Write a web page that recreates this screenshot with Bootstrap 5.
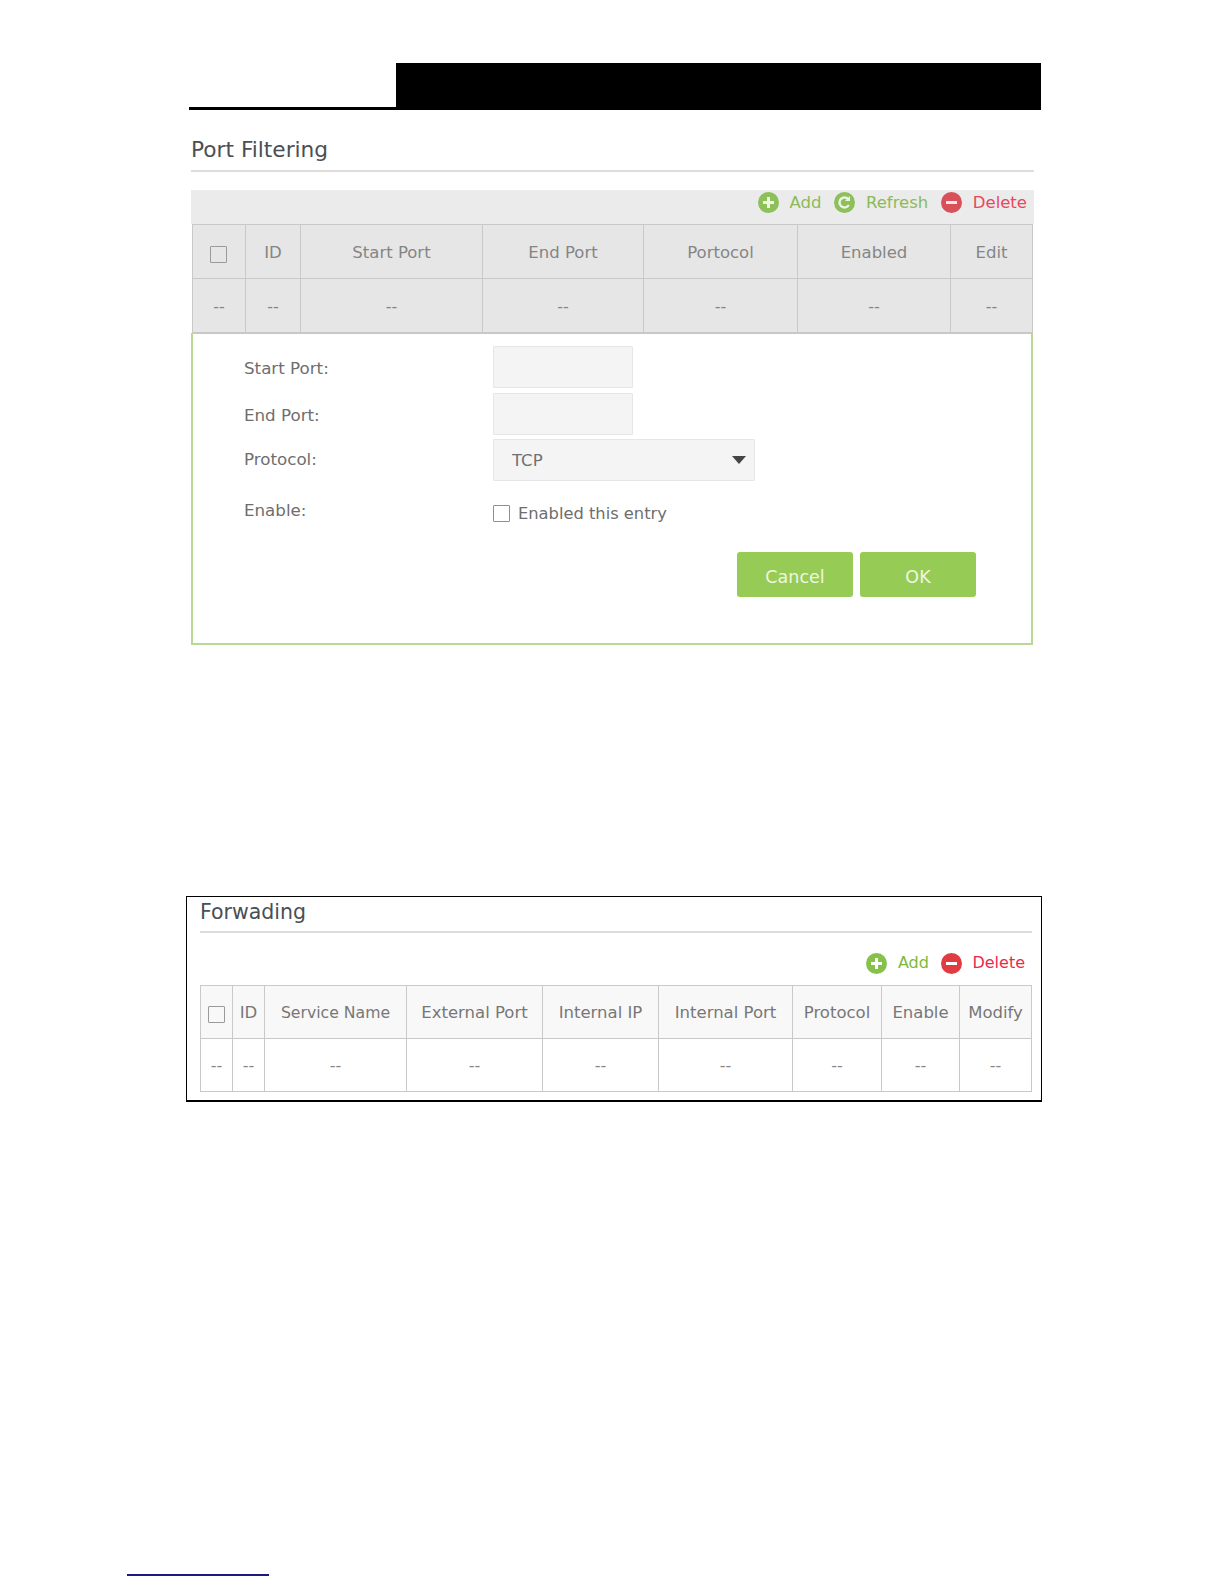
<!DOCTYPE html>
<html lang="en">
<head>
<meta charset="utf-8">
<title>Port Filtering</title>
<link href="https://cdn.jsdelivr.net/npm/bootstrap@5.3.0/dist/css/bootstrap.min.css" rel="stylesheet">
<style>
body{background:#fff;font-family:"DejaVu Sans","Liberation Sans",sans-serif;color:#666;margin:0}
.sheet{width:1224px;height:1584px;padding-top:63px;overflow:hidden;position:relative}
.pg-head{margin-left:189px;width:852px;height:47px}
.pg-head-l{width:207px;border-bottom:3px solid #000}
.pg-head-r{background:#000}
.filter-sec{margin-left:191px;width:843px;margin-top:26px}
.sec-title{font-size:21.700px;line-height:28px;color:#4a4f55;font-weight:400;margin:0;padding-bottom:6px;border-bottom:2px solid #ddd}
.tool-bar{height:34px;background:#ebebeb;margin-top:18px;padding:0 7px 9px 0;font-size:16.500px;line-height:22px;gap:13px}
.tool-item{gap:10.500px}
.tool-add{color:#8abb58}
.tool-del{color:#e8475c}
.fwd-tools .tool-add{color:#7cb93a}
.fwd-tools .tool-del{color:#ea2a4c}
.grid-tbl{table-layout:fixed;font-size:16.500px;margin:0;--bs-table-bg:transparent;--bs-table-border-color:#c9c9c9;border-color:#c9c9c9;text-align:center}
.grid-tbl th,.grid-tbl td{font-weight:400;padding:2px 0 0;vertical-align:middle;color:#858585;border-width:1px;border-style:solid;border-color:#c9c9c9}
.grid-tbl td{font-size:16px}
.grid-a{width:840px;background:#e6e6e6;margin-left:1px}
.grid-a th{padding-top:4px}
.grid-a tr{height:54px}
.box-chk{width:17px;height:17px;border:1px solid #9a9a9a;background:transparent;border-radius:1px;display:inline-block;vertical-align:middle;margin:2px 1px 0 0}
.edit-panel{height:312px;border:2px solid #b9d795;border-top-width:1px;padding:12px 0 0 51px;width:842px;font-size:16.700px;color:#6e6e6e}
.edit-row{display:flex;align-items:center}
.edit-lbl{width:249px}
.lbl-top{margin-top:4px}
.fld{width:140px;height:42px;background:#f4f4f4;border:1px solid #e6e6e6;border-radius:1px;box-shadow:none}
.fld-sel{width:262px;height:42px;background-color:#f4f4f4;border:1px solid #e6e6e6;border-radius:1px;font-size:16.500px;color:#707070;padding:2px 0 0 18px;background-position:right 7px center;background-size:16px 10px;box-shadow:none;font-family:inherit;background-image:url("data:image/svg+xml,%3Csvg xmlns='http://www.w3.org/2000/svg' viewBox='0 0 16 10'%3E%3Cpath fill='%23444' d='M1 1h14L8 9z'/%3E%3C/svg%3E")}
.r-end{margin-top:5px}
.r-proto{margin-top:4px}
.r-en{margin-top:22px;height:22px}
.lbl-en{margin-bottom:6px}
.en-txt{font-size:16.300px}
.form-check-input.en-chk{width:17px;height:17px;border:1px solid #8f8f8f;border-radius:1px;margin:0 8px 2px 0;background:#fff;float:none}
.act-row{gap:7px;margin-top:27px;width:732px;justify-content:flex-end}
.act-btn{width:116px;height:45px;background:#96cb56;border:0;border-radius:3px;color:#eef7e2;font-size:17.500px;padding:5px 0 0}
.fwd-box{margin:251px 0 0 186px;width:856px;height:206px;border:1px solid #000;padding:0 9px 0 13px;border-bottom-width:2px}
.fwd-title{font-size:20.500px;line-height:28px;color:#4a4f55;font-weight:400;margin:0;padding:1px 0 5px;border-bottom:2px solid #ddd;width:832px}
.fwd-tools{height:52px;width:832px;padding:8px 7px 0 0;font-size:16px;line-height:22px;gap:12px}
.grid-b{width:831px;background:#fff}
.grid-b tr{height:53px}
.grid-b th{background:#f8f8f8;color:#777}
.grid-b td{color:#888}
.grid-b .th-svc{font-size:15.700px}
.foot-rule{width:142px;height:2px;background:#1a1a80;position:absolute;top:1574px;left:127px}
.ca1{width:53px}.ca2{width:55px}.ca3{width:182px}.ca4{width:161px}.ca5{width:154px}.ca6{width:153px}.ca7{width:82px}
.cb1{width:32px}.cb2{width:32px}.cb3{width:142px}.cb4{width:136px}.cb5{width:116px}.cb6{width:134px}.cb7{width:89px}.cb8{width:78px}.cb9{width:72px}
</style>
</head>
<body>
<div class="sheet">
  <div class="pg-head d-flex">
    <div class="pg-head-l"></div>
    <div class="pg-head-r flex-grow-1"></div>
  </div>

  <section class="filter-sec">
    <h5 class="sec-title">Port Filtering</h5>
    <div class="tool-bar d-flex justify-content-end align-items-center">
      <span class="tool-item d-inline-flex align-items-center tool-add">
        <svg width="21" height="21" viewBox="0 0 21 21"><circle cx="10.500" cy="10.500" r="10.500" fill="#8dbf5a"/><path d="M10.500 5v11M5 10.500h11" stroke="#eef4e4" stroke-width="3"/></svg>Add</span>
      <span class="tool-item d-inline-flex align-items-center tool-add">
        <svg width="21" height="21" viewBox="0 0 21 21"><circle cx="10.500" cy="10.500" r="10.500" fill="#8dbf5a"/><path d="M14.800 13A5 5 0 1 1 14.500 7.500" fill="none" stroke="#eef4e4" stroke-width="2.400"/><path d="M16 4v5h-5z" fill="#eef4e4"/></svg>Refresh</span>
      <span class="tool-item d-inline-flex align-items-center tool-del">
        <svg width="21" height="21" viewBox="0 0 21 21"><circle cx="10.500" cy="10.500" r="10.500" fill="#d9505a"/><path d="M5 10.500h11" stroke="#f8e6e6" stroke-width="3"/></svg>Delete</span>
    </div>
    <table class="table grid-tbl grid-a">
      <colgroup><col class="ca1"><col class="ca2"><col class="ca3"><col class="ca4"><col class="ca5"><col class="ca6"><col class="ca7"></colgroup>
      <thead><tr><th><span class="box-chk"></span></th><th>ID</th><th>Start Port</th><th>End Port</th><th>Portocol</th><th>Enabled</th><th>Edit</th></tr></thead>
      <tbody><tr><td>--</td><td>--</td><td>--</td><td>--</td><td>--</td><td>--</td><td>--</td></tr></tbody>
    </table>
    <form class="edit-panel">
      <div class="edit-row"><label class="edit-lbl lbl-top">Start Port:</label><input class="form-control fld" type="text"></div>
      <div class="edit-row r-end"><label class="edit-lbl lbl-top">End Port:</label><input class="form-control fld" type="text"></div>
      <div class="edit-row r-proto"><label class="edit-lbl">Protocol:</label><select class="form-select fld-sel"><option>TCP</option></select></div>
      <div class="edit-row r-en"><label class="edit-lbl lbl-en">Enable:</label><div class="d-flex align-items-center"><input class="form-check-input en-chk" type="checkbox"><span class="en-txt">Enabled this entry</span></div></div>
      <div class="d-flex act-row"><button type="button" class="btn act-btn">Cancel</button><button type="button" class="btn act-btn">OK</button></div>
    </form>
  </section>

  <section class="fwd-box">
    <h5 class="fwd-title">Forwading</h5>
    <div class="fwd-tools d-flex justify-content-end align-items-center">
      <span class="tool-item d-inline-flex align-items-center tool-add">
        <svg width="21" height="21" viewBox="0 0 21 21"><circle cx="10.500" cy="10.500" r="10.500" fill="#86c24a"/><path d="M10.500 5v11M5 10.500h11" stroke="#fff" stroke-width="3"/></svg>Add</span>
      <span class="tool-item d-inline-flex align-items-center tool-del">
        <svg width="21" height="21" viewBox="0 0 21 21"><circle cx="10.500" cy="10.500" r="10.500" fill="#e03c42"/><path d="M5 10.500h11" stroke="#fff" stroke-width="3"/></svg>Delete</span>
    </div>
    <table class="table grid-tbl grid-b">
      <colgroup><col class="cb1"><col class="cb2"><col class="cb3"><col class="cb4"><col class="cb5"><col class="cb6"><col class="cb7"><col class="cb8"><col class="cb9"></colgroup>
      <thead><tr><th><span class="box-chk"></span></th><th>ID</th><th class="th-svc">Service Name</th><th>External Port</th><th>Internal IP</th><th>Internal Port</th><th>Protocol</th><th>Enable</th><th>Modify</th></tr></thead>
      <tbody><tr><td>--</td><td>--</td><td>--</td><td>--</td><td>--</td><td>--</td><td>--</td><td>--</td><td>--</td></tr></tbody>
    </table>
  </section>
  <div class="foot-rule"></div>
</div>
<script src="https://cdn.jsdelivr.net/npm/bootstrap@5.3.0/dist/js/bootstrap.bundle.min.js"></script>
</body>
</html>
